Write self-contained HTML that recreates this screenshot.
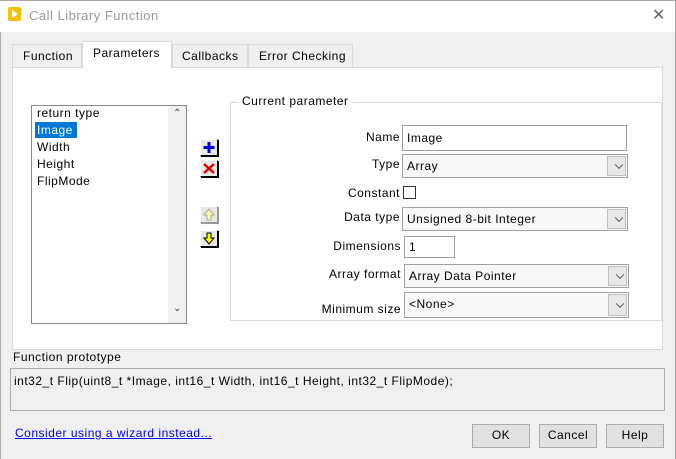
<!DOCTYPE html>
<html><head><meta charset="utf-8"><style>
*{box-sizing:border-box;margin:0;padding:0}
body{width:676px;height:459px;background:#f0f0f0;font-family:"Liberation Sans",sans-serif;font-size:12px;letter-spacing:0.5px;color:#000;position:relative;overflow:hidden}
.a{position:absolute}
.lbl{position:absolute;text-align:right;width:160px;white-space:nowrap}
.inp{position:absolute;background:#fff;border:1px solid #a0a0a0;padding:3px 4px;white-space:nowrap}
.sel{position:absolute;background:#f8f8f8;border:1px solid #a0a0a0;padding:4px 4px;white-space:nowrap}
.sel::after{content:"";position:absolute;right:1px;top:1px;bottom:1px;width:17px;background:#e8e8e8;border:1px solid #c0c0c0}
.chev{position:absolute;right:5px;top:50%;width:6px;height:6px;border-right:1px solid #555;border-bottom:1px solid #555;transform:translateY(-70%) rotate(45deg);z-index:2}
.btn{position:absolute;background:#e1e1e1;border:1px solid #adadad;text-align:center;line-height:21px}
.ib{position:absolute;width:18px;height:17px;background:#e8e8e8;border:1px solid #fff;border-right-color:#000;border-bottom-color:#000;box-shadow:1px 1px 0 #000}
</style></head><body>
<div class="a" style="left:0;top:0;width:676px;height:32px;background:#fff;border-top:1px solid #aaa"></div>
<div class="a" style="left:8px;top:7px;width:13px;height:14px;background:#f5c000;border-radius:2px"></div>
<div class="a" style="left:12px;top:10px;width:0;height:0;border-left:6px solid #fff;border-top:4px solid transparent;border-bottom:4px solid transparent"></div>
<div class="a" style="left:29px;top:8px;color:#999;font-size:13px">Call Library Function</div>
<div class="a" style="left:652px;top:5px;color:#666;font-size:16px">✕</div>
<div class="a" style="left:0;top:32px;width:1px;height:427px;background:#aaa"></div>
<div class="a" style="left:675px;top:0;width:1px;height:459px;background:#aaa"></div>

<div class="a" style="left:12px;top:44px;width:70px;height:24px;border:1px solid #d9d9d9;border-bottom:none;padding:4px 0 0 10px">Function</div>
<div class="a" style="left:172px;top:44px;width:76px;height:24px;border:1px solid #d9d9d9;border-bottom:none;padding:4px 0 0 9px">Callbacks</div>
<div class="a" style="left:248px;top:44px;width:105px;height:24px;border:1px solid #d9d9d9;border-bottom:none;padding:4px 0 0 10px">Error Checking</div>
<div class="a" style="left:12px;top:67px;width:651px;height:283px;background:#fff;border:1px solid #d9d9d9"></div>
<div class="a" style="left:82px;top:41px;width:90px;height:28px;background:#fff;border:1px solid #d9d9d9;border-bottom:none;padding:4px 0 0 10px">Parameters</div>

<div class="a" style="left:31px;top:105px;width:156px;height:219px;border:1px solid #828790;background:#fff"></div>
<div class="a" style="left:168px;top:106px;width:18px;height:217px;background:#f0f0f0"></div>
<div class="a" style="left:173px;top:108px;font-size:10px;color:#444">&#8963;</div>
<div class="a" style="left:173px;top:303px;font-size:10px;color:#444">&#8964;</div>
<div class="a" style="left:37px;top:106px">return type</div>
<div class="a" style="left:35px;top:122px;width:42px;height:16px;background:#0078d7"></div>
<div class="a" style="left:37px;top:123px;color:#fff">Image</div>
<div class="a" style="left:37px;top:140px">Width</div>
<div class="a" style="left:37px;top:157px">Height</div>
<div class="a" style="left:37px;top:174px">FlipMode</div>

<div class="ib" style="left:200px;top:139px"><svg width="16" height="15" style="position:absolute;left:0;top:0"><path d="M8 2v11M2.5 7.5h11" stroke="#0000e0" stroke-width="3"/></svg></div>
<div class="ib" style="left:200px;top:160px"><svg width="16" height="15" style="position:absolute;left:0;top:0"><path d="M3 3l10 9M13 3L3 12" stroke="#e00000" stroke-width="2.5"/></svg></div>
<div class="ib" style="left:200px;top:206px;box-shadow:1px 1px 0 #999;border-right-color:#999;border-bottom-color:#999"><svg width="16" height="15" style="position:absolute;left:0;top:0"><path d="M8 2L3 8h3v5h4V8h3z" fill="#ffffa0" stroke="#aaa"/></svg></div>
<div class="ib" style="left:200px;top:230px"><svg width="16" height="15" style="position:absolute;left:0;top:0"><path d="M8 13L3 7h3V2h4v5h3z" fill="#ffff00" stroke="#000"/></svg></div>

<div class="a" style="left:230px;top:102px;width:432px;height:219px;border:1px solid #d9d9d9"></div>
<div class="a" style="left:238px;top:94px;background:#fff;padding:0 4px">Current parameter</div>

<div class="lbl" style="left:240px;top:130px">Name</div>
<div class="inp" style="left:402px;top:125px;width:225px;height:26px;padding-top:5px">Image</div>
<div class="lbl" style="left:240px;top:157px">Type</div>
<div class="sel" style="left:402px;top:154px;width:226px;height:24px">Array<span class="chev"></span></div>
<div class="lbl" style="left:240px;top:186px">Constant</div>
<div class="a" style="left:403px;top:186px;width:13px;height:13px;border:1px solid #333;background:#fff"></div>
<div class="lbl" style="left:240px;top:210px">Data type</div>
<div class="sel" style="left:402px;top:207px;width:226px;height:24px">Unsigned 8-bit Integer<span class="chev"></span></div>
<div class="lbl" style="left:241px;top:239px">Dimensions</div>
<div class="inp" style="left:404px;top:236px;width:51px;height:22px">1</div>
<div class="lbl" style="left:241px;top:267px">Array format</div>
<div class="sel" style="left:404px;top:264px;width:225px;height:24px">Array Data Pointer<span class="chev"></span></div>
<div class="lbl" style="left:241px;top:302px">Minimum size</div>
<div class="sel" style="left:404px;top:292px;width:225px;height:26px">&lt;None&gt;<span class="chev"></span></div>

<div class="a" style="left:13px;top:350px">Function prototype</div>
<div class="a" style="left:10px;top:368px;width:655px;height:43px;border:1px solid #adadad;background:#f0f0f0;padding:5px 3px;white-space:nowrap">int32_t Flip(uint8_t *Image, int16_t Width, int16_t Height, int32_t FlipMode);</div>
<div class="a" style="left:15px;top:426px;color:#0000ee;text-decoration:underline">Consider using a wizard instead...</div>
<div class="btn" style="left:472px;top:424px;width:58px;height:24px">OK</div>
<div class="btn" style="left:539px;top:424px;width:58px;height:24px">Cancel</div>
<div class="btn" style="left:606px;top:424px;width:58px;height:24px">Help</div>
</body></html>
